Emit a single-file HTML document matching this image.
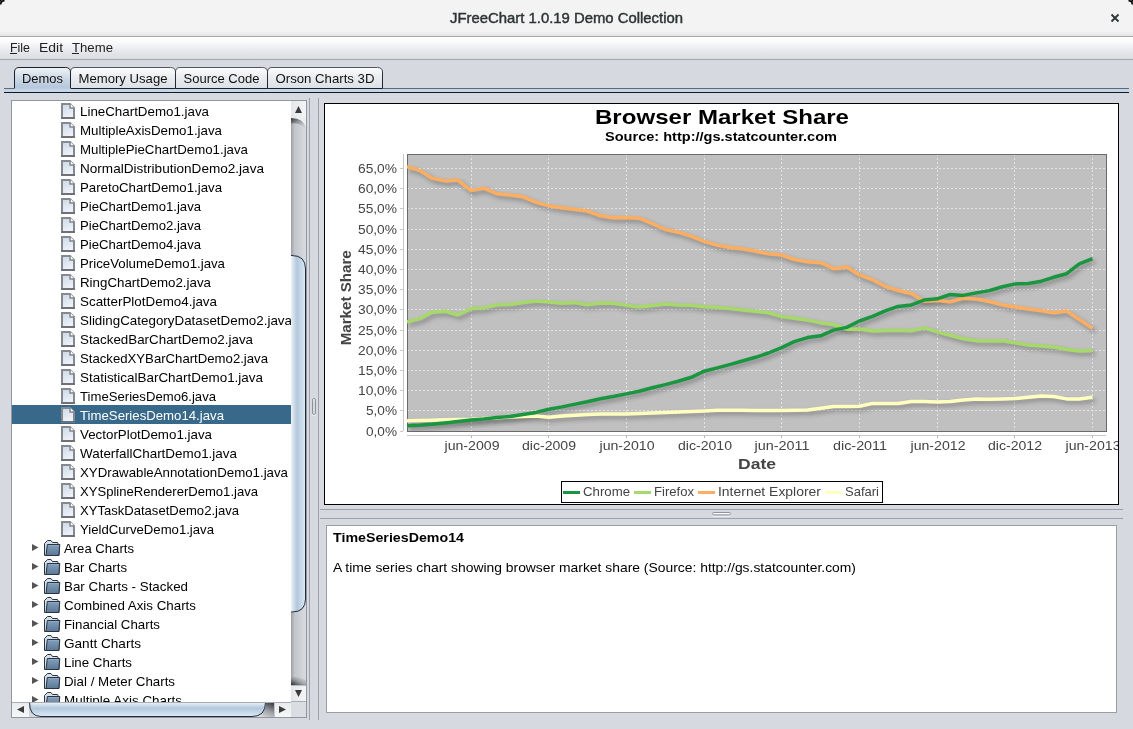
<!DOCTYPE html><html><head><meta charset="utf-8"><style>html,body{margin:0;padding:0;width:1133px;height:729px;overflow:hidden;background:#d6d9df}</style></head><body><svg width="1133" height="729" viewBox="0 0 1133 729" style="position:absolute;left:0;top:0;font-family:'Liberation Sans', sans-serif;will-change:transform">
<defs>
<linearGradient id="menug" x1="0" y1="0" x2="0" y2="1"><stop offset="0" stop-color="#fefefe"/><stop offset="0.2" stop-color="#fbfbfc"/><stop offset="0.55" stop-color="#eaecef"/><stop offset="1" stop-color="#d8dbe0"/></linearGradient>
<linearGradient id="tabsel" x1="0" y1="0" x2="0" y2="1"><stop offset="0" stop-color="#f2f5f8"/><stop offset="0.4" stop-color="#d0dbe7"/><stop offset="0.8" stop-color="#b6c8db"/><stop offset="1" stop-color="#c3d5e7"/></linearGradient>
<linearGradient id="tabun" x1="0" y1="0" x2="0" y2="1"><stop offset="0" stop-color="#fdfdfd"/><stop offset="0.4" stop-color="#eceef1"/><stop offset="1" stop-color="#dcdfe4"/></linearGradient>
<linearGradient id="trackv" x1="0" y1="0" x2="1" y2="0"><stop offset="0" stop-color="#9c9fa4"/><stop offset="0.25" stop-color="#c3c6cb"/><stop offset="1" stop-color="#d8dbe0"/></linearGradient><linearGradient id="trackh" x1="0" y1="0" x2="0" y2="1"><stop offset="0" stop-color="#9c9fa4"/><stop offset="0.25" stop-color="#c3c6cb"/><stop offset="1" stop-color="#d8dbe0"/></linearGradient><linearGradient id="wellt" x1="0" y1="0" x2="0.6" y2="1"><stop offset="0" stop-color="#2e3034"/><stop offset="1" stop-color="#c3c6cb" stop-opacity="0"/></linearGradient><linearGradient id="wellb" x1="0" y1="1" x2="1" y2="0"><stop offset="0" stop-color="#2a2c30"/><stop offset="0.45" stop-color="#9a9da2"/><stop offset="1" stop-color="#e6e8ea"/></linearGradient><linearGradient id="wellh" x1="1" y1="0" x2="0.3" y2="1"><stop offset="0" stop-color="#2a2c30"/><stop offset="0.5" stop-color="#9a9da2"/><stop offset="1" stop-color="#e6e8ea"/></linearGradient><linearGradient id="titleb" x1="0" y1="0" x2="0" y2="1"><stop offset="0" stop-color="#f3f3f3"/><stop offset="1" stop-color="#e4e4e4"/></linearGradient><linearGradient id="tabstroke" x1="0" y1="0" x2="0" y2="1"><stop offset="0" stop-color="#50555e"/><stop offset="0.35" stop-color="#262d38"/><stop offset="1" stop-color="#1a2230"/></linearGradient><linearGradient id="wellg" x1="0" y1="0" x2="0" y2="1"><stop offset="0" stop-color="#6a6d72"/><stop offset="1" stop-color="#c3c6cb" stop-opacity="0"/></linearGradient><linearGradient id="btnh" x1="0" y1="0" x2="0" y2="1"><stop offset="0" stop-color="#e9ebee"/><stop offset="1" stop-color="#f6f7f8"/></linearGradient>
<linearGradient id="thumbv" x1="0" y1="0" x2="1" y2="0"><stop offset="0" stop-color="#eef3f8"/><stop offset="0.12" stop-color="#d9e4ee"/><stop offset="0.4" stop-color="#b3c8dc"/><stop offset="0.8" stop-color="#cfe0ee"/><stop offset="1" stop-color="#e2eef7"/></linearGradient>
<linearGradient id="thumbh" x1="0" y1="0" x2="0" y2="1"><stop offset="0" stop-color="#eef3f8"/><stop offset="0.12" stop-color="#d9e4ee"/><stop offset="0.4" stop-color="#b3c8dc"/><stop offset="0.8" stop-color="#cfe0ee"/><stop offset="1" stop-color="#e2eef7"/></linearGradient>
<linearGradient id="btnv" x1="0" y1="0" x2="1" y2="0"><stop offset="0" stop-color="#e4e6e9"/><stop offset="1" stop-color="#f4f5f6"/></linearGradient>
<linearGradient id="fileg" x1="0" y1="0" x2="0.4" y2="1"><stop offset="0" stop-color="#cbd8e7"/><stop offset="1" stop-color="#eef2f8"/></linearGradient>
<linearGradient id="foldg" x1="0" y1="0" x2="0" y2="1"><stop offset="0" stop-color="#a9bdd2"/><stop offset="0.15" stop-color="#7f9ab6"/><stop offset="1" stop-color="#5a7796"/></linearGradient>
<filter id="shadow" x="-5%" y="-10%" width="110%" height="130%"><feGaussianBlur stdDeviation="1.9"/></filter>
</defs>
<rect x="0" y="0" width="1133" height="729" fill="#d6d9df"/>
<rect x="0" y="0" width="1133" height="36" fill="#f3f3f3"/>
<rect x="0" y="36" width="1133" height="1" fill="#a7a7a7"/>
<text x="450" y="23" font-size="15" font-weight="normal" fill="#2e3436" text-anchor="start" textLength="233" lengthAdjust="spacingAndGlyphs" stroke="#2e3436" stroke-width="0.45">JFreeChart 1.0.19 Demo Collection</text>
<path d="M1111.5 14.5 L1118.5 21.5 M1118.5 14.5 L1111.5 21.5" stroke="#2e3436" stroke-width="1.8"/>
<path d="M0 0 L4 0 Q0 0 0 4 Z" fill="#000"/>
<path d="M0.7 4.5 Q0.7 0.7 4.5 0.7" fill="none" stroke="#000" stroke-width="1.6"/>
<path d="M1133 0 L1129 0 Q1133 0 1133 4 Z" fill="#000"/>
<path d="M1132.3 4.5 Q1132.3 0.7 1128.5 0.7" fill="none" stroke="#000" stroke-width="1.6"/>
<rect x="0" y="31" width="1133" height="5" fill="url(#titleb)"/>
<rect x="0" y="37" width="1133" height="22" fill="url(#menug)"/>
<rect x="0" y="59" width="1133" height="1" fill="#a4a6aa"/>
<text x="10" y="52" font-size="13" font-weight="normal" fill="#222" text-anchor="start" textLength="20" lengthAdjust="spacingAndGlyphs" >File</text>
<text x="39" y="52" font-size="13" font-weight="normal" fill="#222" text-anchor="start" textLength="24" lengthAdjust="spacingAndGlyphs" >Edit</text>
<text x="72" y="52" font-size="13" font-weight="normal" fill="#222" text-anchor="start" textLength="41" lengthAdjust="spacingAndGlyphs" >Theme</text>
<rect x="10" y="53" width="7" height="1" fill="#222"/>
<rect x="72" y="53" width="7" height="1" fill="#222"/>
<rect x="4" y="88" width="1125" height="1" fill="#5f6a76"/>
<rect x="4" y="89" width="1125" height="3" fill="#c3d5e7"/>
<rect x="4" y="92" width="1125" height="1" fill="#0e1826"/>
<path d="M267.5 88.5 L267.5 72 Q267.5 67.5 272 67.5 L377.5 67.5 Q382.5 67.5 382.5 72 L382.5 88.5 Z" fill="url(#tabun)" stroke="url(#tabstroke)" stroke-width="1"/>
<text x="275.5" y="83" font-size="13" font-weight="normal" fill="#111" text-anchor="start" textLength="99" lengthAdjust="spacingAndGlyphs" >Orson Charts 3D</text>
<path d="M175.5 88.5 L175.5 72 Q175.5 67.5 180 67.5 L262.5 67.5 Q267.5 67.5 267.5 72 L267.5 88.5 Z" fill="url(#tabun)" stroke="url(#tabstroke)" stroke-width="1"/>
<text x="183.5" y="83" font-size="13" font-weight="normal" fill="#111" text-anchor="start" textLength="76" lengthAdjust="spacingAndGlyphs" >Source Code</text>
<path d="M70.5 88.5 L70.5 72 Q70.5 67.5 75 67.5 L170.5 67.5 Q175.5 67.5 175.5 72 L175.5 88.5 Z" fill="url(#tabun)" stroke="url(#tabstroke)" stroke-width="1"/>
<text x="78.5" y="83" font-size="13" font-weight="normal" fill="#111" text-anchor="start" textLength="89" lengthAdjust="spacingAndGlyphs" >Memory Usage</text>
<path d="M14 92 L14 72 Q14 67 19 67 L65.5 67 Q71 67 71 72 L71 92 Z" fill="url(#tabsel)"/>
<path d="M14.5 88.5 L14.5 72 Q14.5 67.5 19 67.5 L65.5 67.5 Q70.5 67.5 70.5 72 L70.5 88.5" fill="none" stroke="#18222e" stroke-width="1"/>
<rect x="14" y="89" width="57" height="3" fill="#c3d5e7"/>
<text x="22.0" y="83" font-size="13" font-weight="normal" fill="#111" text-anchor="start" textLength="41" lengthAdjust="spacingAndGlyphs" >Demos</text>
<rect x="11.5" y="100.5" width="295" height="617" fill="#fff" stroke="#93979d" stroke-width="1"/>
<svg x="12" y="101" width="279" height="601" viewBox="12 101 279 601" overflow="hidden">
<path d="M62 104 L70 104 L74 108 L74 118 L62 118 Z" fill="url(#fileg)" stroke="#868a90" stroke-width="2"/>
<path d="M70.5 104 L70.5 107.5 L74 107.5 Z" fill="#fff"/>
<path d="M70 104 L70 108 L74 108" fill="none" stroke="#868a90" stroke-width="1.5"/>
<rect x="61" y="117" width="14" height="2" fill="#6e7278"/>
<text x="80" y="116" font-size="13" font-weight="normal" fill="#000" text-anchor="start" textLength="129" lengthAdjust="spacingAndGlyphs" >LineChartDemo1.java</text>
<path d="M62 123 L70 123 L74 127 L74 137 L62 137 Z" fill="url(#fileg)" stroke="#868a90" stroke-width="2"/>
<path d="M70.5 123 L70.5 126.5 L74 126.5 Z" fill="#fff"/>
<path d="M70 123 L70 127 L74 127" fill="none" stroke="#868a90" stroke-width="1.5"/>
<rect x="61" y="136" width="14" height="2" fill="#6e7278"/>
<text x="80" y="135" font-size="13" font-weight="normal" fill="#000" text-anchor="start" textLength="142" lengthAdjust="spacingAndGlyphs" >MultipleAxisDemo1.java</text>
<path d="M62 142 L70 142 L74 146 L74 156 L62 156 Z" fill="url(#fileg)" stroke="#868a90" stroke-width="2"/>
<path d="M70.5 142 L70.5 145.5 L74 145.5 Z" fill="#fff"/>
<path d="M70 142 L70 146 L74 146" fill="none" stroke="#868a90" stroke-width="1.5"/>
<rect x="61" y="155" width="14" height="2" fill="#6e7278"/>
<text x="80" y="154" font-size="13" font-weight="normal" fill="#000" text-anchor="start" textLength="168" lengthAdjust="spacingAndGlyphs" >MultiplePieChartDemo1.java</text>
<path d="M62 161 L70 161 L74 165 L74 175 L62 175 Z" fill="url(#fileg)" stroke="#868a90" stroke-width="2"/>
<path d="M70.5 161 L70.5 164.5 L74 164.5 Z" fill="#fff"/>
<path d="M70 161 L70 165 L74 165" fill="none" stroke="#868a90" stroke-width="1.5"/>
<rect x="61" y="174" width="14" height="2" fill="#6e7278"/>
<text x="80" y="173" font-size="13" font-weight="normal" fill="#000" text-anchor="start" textLength="184" lengthAdjust="spacingAndGlyphs" >NormalDistributionDemo2.java</text>
<path d="M62 180 L70 180 L74 184 L74 194 L62 194 Z" fill="url(#fileg)" stroke="#868a90" stroke-width="2"/>
<path d="M70.5 180 L70.5 183.5 L74 183.5 Z" fill="#fff"/>
<path d="M70 180 L70 184 L74 184" fill="none" stroke="#868a90" stroke-width="1.5"/>
<rect x="61" y="193" width="14" height="2" fill="#6e7278"/>
<text x="80" y="192" font-size="13" font-weight="normal" fill="#000" text-anchor="start" textLength="142" lengthAdjust="spacingAndGlyphs" >ParetoChartDemo1.java</text>
<path d="M62 199 L70 199 L74 203 L74 213 L62 213 Z" fill="url(#fileg)" stroke="#868a90" stroke-width="2"/>
<path d="M70.5 199 L70.5 202.5 L74 202.5 Z" fill="#fff"/>
<path d="M70 199 L70 203 L74 203" fill="none" stroke="#868a90" stroke-width="1.5"/>
<rect x="61" y="212" width="14" height="2" fill="#6e7278"/>
<text x="80" y="211" font-size="13" font-weight="normal" fill="#000" text-anchor="start" textLength="121" lengthAdjust="spacingAndGlyphs" >PieChartDemo1.java</text>
<path d="M62 218 L70 218 L74 222 L74 232 L62 232 Z" fill="url(#fileg)" stroke="#868a90" stroke-width="2"/>
<path d="M70.5 218 L70.5 221.5 L74 221.5 Z" fill="#fff"/>
<path d="M70 218 L70 222 L74 222" fill="none" stroke="#868a90" stroke-width="1.5"/>
<rect x="61" y="231" width="14" height="2" fill="#6e7278"/>
<text x="80" y="230" font-size="13" font-weight="normal" fill="#000" text-anchor="start" textLength="121" lengthAdjust="spacingAndGlyphs" >PieChartDemo2.java</text>
<path d="M62 237 L70 237 L74 241 L74 251 L62 251 Z" fill="url(#fileg)" stroke="#868a90" stroke-width="2"/>
<path d="M70.5 237 L70.5 240.5 L74 240.5 Z" fill="#fff"/>
<path d="M70 237 L70 241 L74 241" fill="none" stroke="#868a90" stroke-width="1.5"/>
<rect x="61" y="250" width="14" height="2" fill="#6e7278"/>
<text x="80" y="249" font-size="13" font-weight="normal" fill="#000" text-anchor="start" textLength="121" lengthAdjust="spacingAndGlyphs" >PieChartDemo4.java</text>
<path d="M62 256 L70 256 L74 260 L74 270 L62 270 Z" fill="url(#fileg)" stroke="#868a90" stroke-width="2"/>
<path d="M70.5 256 L70.5 259.5 L74 259.5 Z" fill="#fff"/>
<path d="M70 256 L70 260 L74 260" fill="none" stroke="#868a90" stroke-width="1.5"/>
<rect x="61" y="269" width="14" height="2" fill="#6e7278"/>
<text x="80" y="268" font-size="13" font-weight="normal" fill="#000" text-anchor="start" textLength="145" lengthAdjust="spacingAndGlyphs" >PriceVolumeDemo1.java</text>
<path d="M62 275 L70 275 L74 279 L74 289 L62 289 Z" fill="url(#fileg)" stroke="#868a90" stroke-width="2"/>
<path d="M70.5 275 L70.5 278.5 L74 278.5 Z" fill="#fff"/>
<path d="M70 275 L70 279 L74 279" fill="none" stroke="#868a90" stroke-width="1.5"/>
<rect x="61" y="288" width="14" height="2" fill="#6e7278"/>
<text x="80" y="287" font-size="13" font-weight="normal" fill="#000" text-anchor="start" textLength="131" lengthAdjust="spacingAndGlyphs" >RingChartDemo2.java</text>
<path d="M62 294 L70 294 L74 298 L74 308 L62 308 Z" fill="url(#fileg)" stroke="#868a90" stroke-width="2"/>
<path d="M70.5 294 L70.5 297.5 L74 297.5 Z" fill="#fff"/>
<path d="M70 294 L70 298 L74 298" fill="none" stroke="#868a90" stroke-width="1.5"/>
<rect x="61" y="307" width="14" height="2" fill="#6e7278"/>
<text x="80" y="306" font-size="13" font-weight="normal" fill="#000" text-anchor="start" textLength="137" lengthAdjust="spacingAndGlyphs" >ScatterPlotDemo4.java</text>
<path d="M62 313 L70 313 L74 317 L74 327 L62 327 Z" fill="url(#fileg)" stroke="#868a90" stroke-width="2"/>
<path d="M70.5 313 L70.5 316.5 L74 316.5 Z" fill="#fff"/>
<path d="M70 313 L70 317 L74 317" fill="none" stroke="#868a90" stroke-width="1.5"/>
<rect x="61" y="326" width="14" height="2" fill="#6e7278"/>
<text x="80" y="325" font-size="13" font-weight="normal" fill="#000" text-anchor="start" textLength="212" lengthAdjust="spacingAndGlyphs" >SlidingCategoryDatasetDemo2.java</text>
<path d="M62 332 L70 332 L74 336 L74 346 L62 346 Z" fill="url(#fileg)" stroke="#868a90" stroke-width="2"/>
<path d="M70.5 332 L70.5 335.5 L74 335.5 Z" fill="#fff"/>
<path d="M70 332 L70 336 L74 336" fill="none" stroke="#868a90" stroke-width="1.5"/>
<rect x="61" y="345" width="14" height="2" fill="#6e7278"/>
<text x="80" y="344" font-size="13" font-weight="normal" fill="#000" text-anchor="start" textLength="173" lengthAdjust="spacingAndGlyphs" >StackedBarChartDemo2.java</text>
<path d="M62 351 L70 351 L74 355 L74 365 L62 365 Z" fill="url(#fileg)" stroke="#868a90" stroke-width="2"/>
<path d="M70.5 351 L70.5 354.5 L74 354.5 Z" fill="#fff"/>
<path d="M70 351 L70 355 L74 355" fill="none" stroke="#868a90" stroke-width="1.5"/>
<rect x="61" y="364" width="14" height="2" fill="#6e7278"/>
<text x="80" y="363" font-size="13" font-weight="normal" fill="#000" text-anchor="start" textLength="188" lengthAdjust="spacingAndGlyphs" >StackedXYBarChartDemo2.java</text>
<path d="M62 370 L70 370 L74 374 L74 384 L62 384 Z" fill="url(#fileg)" stroke="#868a90" stroke-width="2"/>
<path d="M70.5 370 L70.5 373.5 L74 373.5 Z" fill="#fff"/>
<path d="M70 370 L70 374 L74 374" fill="none" stroke="#868a90" stroke-width="1.5"/>
<rect x="61" y="383" width="14" height="2" fill="#6e7278"/>
<text x="80" y="382" font-size="13" font-weight="normal" fill="#000" text-anchor="start" textLength="183" lengthAdjust="spacingAndGlyphs" >StatisticalBarChartDemo1.java</text>
<path d="M62 389 L70 389 L74 393 L74 403 L62 403 Z" fill="url(#fileg)" stroke="#868a90" stroke-width="2"/>
<path d="M70.5 389 L70.5 392.5 L74 392.5 Z" fill="#fff"/>
<path d="M70 389 L70 393 L74 393" fill="none" stroke="#868a90" stroke-width="1.5"/>
<rect x="61" y="402" width="14" height="2" fill="#6e7278"/>
<text x="80" y="401" font-size="13" font-weight="normal" fill="#000" text-anchor="start" textLength="136" lengthAdjust="spacingAndGlyphs" >TimeSeriesDemo6.java</text>
<rect x="12" y="405" width="279" height="19" fill="#39698a"/>
<path d="M62 408 L70 408 L74 412 L74 422 L62 422 Z" fill="url(#fileg)" stroke="#868a90" stroke-width="2"/>
<path d="M70.5 408 L70.5 411.5 L74 411.5 Z" fill="#fff"/>
<path d="M70 408 L70 412 L74 412" fill="none" stroke="#868a90" stroke-width="1.5"/>
<rect x="61" y="421" width="14" height="2" fill="#6e7278"/>
<text x="80" y="420" font-size="13" font-weight="normal" fill="#fff" text-anchor="start" textLength="144" lengthAdjust="spacingAndGlyphs" >TimeSeriesDemo14.java</text>
<path d="M62 427 L70 427 L74 431 L74 441 L62 441 Z" fill="url(#fileg)" stroke="#868a90" stroke-width="2"/>
<path d="M70.5 427 L70.5 430.5 L74 430.5 Z" fill="#fff"/>
<path d="M70 427 L70 431 L74 431" fill="none" stroke="#868a90" stroke-width="1.5"/>
<rect x="61" y="440" width="14" height="2" fill="#6e7278"/>
<text x="80" y="439" font-size="13" font-weight="normal" fill="#000" text-anchor="start" textLength="132" lengthAdjust="spacingAndGlyphs" >VectorPlotDemo1.java</text>
<path d="M62 446 L70 446 L74 450 L74 460 L62 460 Z" fill="url(#fileg)" stroke="#868a90" stroke-width="2"/>
<path d="M70.5 446 L70.5 449.5 L74 449.5 Z" fill="#fff"/>
<path d="M70 446 L70 450 L74 450" fill="none" stroke="#868a90" stroke-width="1.5"/>
<rect x="61" y="459" width="14" height="2" fill="#6e7278"/>
<text x="80" y="458" font-size="13" font-weight="normal" fill="#000" text-anchor="start" textLength="157" lengthAdjust="spacingAndGlyphs" >WaterfallChartDemo1.java</text>
<path d="M62 465 L70 465 L74 469 L74 479 L62 479 Z" fill="url(#fileg)" stroke="#868a90" stroke-width="2"/>
<path d="M70.5 465 L70.5 468.5 L74 468.5 Z" fill="#fff"/>
<path d="M70 465 L70 469 L74 469" fill="none" stroke="#868a90" stroke-width="1.5"/>
<rect x="61" y="478" width="14" height="2" fill="#6e7278"/>
<text x="80" y="477" font-size="13" font-weight="normal" fill="#000" text-anchor="start" textLength="208" lengthAdjust="spacingAndGlyphs" >XYDrawableAnnotationDemo1.java</text>
<path d="M62 484 L70 484 L74 488 L74 498 L62 498 Z" fill="url(#fileg)" stroke="#868a90" stroke-width="2"/>
<path d="M70.5 484 L70.5 487.5 L74 487.5 Z" fill="#fff"/>
<path d="M70 484 L70 488 L74 488" fill="none" stroke="#868a90" stroke-width="1.5"/>
<rect x="61" y="497" width="14" height="2" fill="#6e7278"/>
<text x="80" y="496" font-size="13" font-weight="normal" fill="#000" text-anchor="start" textLength="178" lengthAdjust="spacingAndGlyphs" >XYSplineRendererDemo1.java</text>
<path d="M62 503 L70 503 L74 507 L74 517 L62 517 Z" fill="url(#fileg)" stroke="#868a90" stroke-width="2"/>
<path d="M70.5 503 L70.5 506.5 L74 506.5 Z" fill="#fff"/>
<path d="M70 503 L70 507 L74 507" fill="none" stroke="#868a90" stroke-width="1.5"/>
<rect x="61" y="516" width="14" height="2" fill="#6e7278"/>
<text x="80" y="515" font-size="13" font-weight="normal" fill="#000" text-anchor="start" textLength="159" lengthAdjust="spacingAndGlyphs" >XYTaskDatasetDemo2.java</text>
<path d="M62 522 L70 522 L74 526 L74 536 L62 536 Z" fill="url(#fileg)" stroke="#868a90" stroke-width="2"/>
<path d="M70.5 522 L70.5 525.5 L74 525.5 Z" fill="#fff"/>
<path d="M70 522 L70 526 L74 526" fill="none" stroke="#868a90" stroke-width="1.5"/>
<rect x="61" y="535" width="14" height="2" fill="#6e7278"/>
<text x="80" y="534" font-size="13" font-weight="normal" fill="#000" text-anchor="start" textLength="134" lengthAdjust="spacingAndGlyphs" >YieldCurveDemo1.java</text>
<path d="M32 544 L38.5 547.5 L32 551 Z" fill="#555"/>
<path d="M44.5 555.5 L44.5 543.5 L47.5 540.5 L51 540.5 L52.5 542.5 L57.5 542.5 L58.5 544.5 L59.5 544.5 L59 555.5 Z" fill="#d3dfeb" stroke="#28333f" stroke-width="1"/>
<path d="M46 555.5 L47.3 544.5 L59.8 544.5 L58.8 555.5 Z" fill="url(#foldg)" stroke="#28333f" stroke-width="1"/>
<text x="64" y="553" font-size="13" font-weight="normal" fill="#000" text-anchor="start" textLength="70" lengthAdjust="spacingAndGlyphs" >Area Charts</text>
<path d="M32 563 L38.5 566.5 L32 570 Z" fill="#555"/>
<path d="M44.5 574.5 L44.5 562.5 L47.5 559.5 L51 559.5 L52.5 561.5 L57.5 561.5 L58.5 563.5 L59.5 563.5 L59 574.5 Z" fill="#d3dfeb" stroke="#28333f" stroke-width="1"/>
<path d="M46 574.5 L47.3 563.5 L59.8 563.5 L58.8 574.5 Z" fill="url(#foldg)" stroke="#28333f" stroke-width="1"/>
<text x="64" y="572" font-size="13" font-weight="normal" fill="#000" text-anchor="start" textLength="63" lengthAdjust="spacingAndGlyphs" >Bar Charts</text>
<path d="M32 582 L38.5 585.5 L32 589 Z" fill="#555"/>
<path d="M44.5 593.5 L44.5 581.5 L47.5 578.5 L51 578.5 L52.5 580.5 L57.5 580.5 L58.5 582.5 L59.5 582.5 L59 593.5 Z" fill="#d3dfeb" stroke="#28333f" stroke-width="1"/>
<path d="M46 593.5 L47.3 582.5 L59.8 582.5 L58.8 593.5 Z" fill="url(#foldg)" stroke="#28333f" stroke-width="1"/>
<text x="64" y="591" font-size="13" font-weight="normal" fill="#000" text-anchor="start" textLength="124" lengthAdjust="spacingAndGlyphs" >Bar Charts - Stacked</text>
<path d="M32 601 L38.5 604.5 L32 608 Z" fill="#555"/>
<path d="M44.5 612.5 L44.5 600.5 L47.5 597.5 L51 597.5 L52.5 599.5 L57.5 599.5 L58.5 601.5 L59.5 601.5 L59 612.5 Z" fill="#d3dfeb" stroke="#28333f" stroke-width="1"/>
<path d="M46 612.5 L47.3 601.5 L59.8 601.5 L58.8 612.5 Z" fill="url(#foldg)" stroke="#28333f" stroke-width="1"/>
<text x="64" y="610" font-size="13" font-weight="normal" fill="#000" text-anchor="start" textLength="132" lengthAdjust="spacingAndGlyphs" >Combined Axis Charts</text>
<path d="M32 620 L38.5 623.5 L32 627 Z" fill="#555"/>
<path d="M44.5 631.5 L44.5 619.5 L47.5 616.5 L51 616.5 L52.5 618.5 L57.5 618.5 L58.5 620.5 L59.5 620.5 L59 631.5 Z" fill="#d3dfeb" stroke="#28333f" stroke-width="1"/>
<path d="M46 631.5 L47.3 620.5 L59.8 620.5 L58.8 631.5 Z" fill="url(#foldg)" stroke="#28333f" stroke-width="1"/>
<text x="64" y="629" font-size="13" font-weight="normal" fill="#000" text-anchor="start" textLength="96" lengthAdjust="spacingAndGlyphs" >Financial Charts</text>
<path d="M32 639 L38.5 642.5 L32 646 Z" fill="#555"/>
<path d="M44.5 650.5 L44.5 638.5 L47.5 635.5 L51 635.5 L52.5 637.5 L57.5 637.5 L58.5 639.5 L59.5 639.5 L59 650.5 Z" fill="#d3dfeb" stroke="#28333f" stroke-width="1"/>
<path d="M46 650.5 L47.3 639.5 L59.8 639.5 L58.8 650.5 Z" fill="url(#foldg)" stroke="#28333f" stroke-width="1"/>
<text x="64" y="648" font-size="13" font-weight="normal" fill="#000" text-anchor="start" textLength="77" lengthAdjust="spacingAndGlyphs" >Gantt Charts</text>
<path d="M32 658 L38.5 661.5 L32 665 Z" fill="#555"/>
<path d="M44.5 669.5 L44.5 657.5 L47.5 654.5 L51 654.5 L52.5 656.5 L57.5 656.5 L58.5 658.5 L59.5 658.5 L59 669.5 Z" fill="#d3dfeb" stroke="#28333f" stroke-width="1"/>
<path d="M46 669.5 L47.3 658.5 L59.8 658.5 L58.8 669.5 Z" fill="url(#foldg)" stroke="#28333f" stroke-width="1"/>
<text x="64" y="667" font-size="13" font-weight="normal" fill="#000" text-anchor="start" textLength="68" lengthAdjust="spacingAndGlyphs" >Line Charts</text>
<path d="M32 677 L38.5 680.5 L32 684 Z" fill="#555"/>
<path d="M44.5 688.5 L44.5 676.5 L47.5 673.5 L51 673.5 L52.5 675.5 L57.5 675.5 L58.5 677.5 L59.5 677.5 L59 688.5 Z" fill="#d3dfeb" stroke="#28333f" stroke-width="1"/>
<path d="M46 688.5 L47.3 677.5 L59.8 677.5 L58.8 688.5 Z" fill="url(#foldg)" stroke="#28333f" stroke-width="1"/>
<text x="64" y="686" font-size="13" font-weight="normal" fill="#000" text-anchor="start" textLength="111" lengthAdjust="spacingAndGlyphs" >Dial / Meter Charts</text>
<path d="M32 696 L38.5 699.5 L32 703 Z" fill="#555"/>
<path d="M44.5 707.5 L44.5 695.5 L47.5 692.5 L51 692.5 L52.5 694.5 L57.5 694.5 L58.5 696.5 L59.5 696.5 L59 707.5 Z" fill="#d3dfeb" stroke="#28333f" stroke-width="1"/>
<path d="M46 707.5 L47.3 696.5 L59.8 696.5 L58.8 707.5 Z" fill="url(#foldg)" stroke="#28333f" stroke-width="1"/>
<text x="64" y="705" font-size="13" font-weight="normal" fill="#000" text-anchor="start" textLength="118" lengthAdjust="spacingAndGlyphs" >Multiple Axis Charts</text>
</svg>
<rect x="291" y="101" width="15" height="601" fill="url(#trackv)"/>
<path d="M291 118 Q303 118 306 127 L306 132 Q302 122 291 123.5 Z" fill="url(#wellt)"/>
<path d="M291 118 L306 118 L306 127 Q303 118 291 118 Z" fill="#eceef0"/>
<rect x="291" y="101" width="15" height="17" fill="url(#btnv)"/>
<path d="M298.5 106 L302 113 L295 113 Z" fill="#3a3a3a"/>
<path d="M291 676.5 Q301 677 306 680 L306 685 L291 685 Z" fill="url(#wellb)"/>
<rect x="291" y="685" width="15" height="17" fill="url(#btnv)"/>
<rect x="291" y="685" width="15" height="1" fill="#b9bcc1"/>
<path d="M295 690 L302 690 L298.5 697 Z" fill="#3a3a3a"/>
<path d="M291 255 L292 255 Q306 255 306 269 L306 599 Q306 612.5 292 612.5 L291 612.5 Z" fill="url(#thumbv)"/>
<path d="M291 255.5 L292 255.5 Q305.5 255.5 305.5 269 L305.5 599 Q305.5 612 292 612 L291 612" fill="none" stroke="#1f2b39" stroke-width="1"/>
<rect x="306" y="101" width="1" height="617" fill="#93979d"/>
<rect x="12" y="702" width="279" height="15" fill="url(#trackh)"/>
<rect x="12" y="702" width="17" height="15" fill="url(#btnh)"/>
<path d="M17 709.5 L24 706 L24 713 Z" fill="#3a3a3a"/>
<path d="M262 702 L274 702 L274 717 L250 717 Q266 716 266 702 Z" fill="url(#wellh)"/>
<rect x="274" y="702" width="17" height="15" fill="url(#btnh)"/>
<rect x="274" y="702" width="1" height="15" fill="#c4c7cc"/>
<path d="M286 709.5 L279 706 L279 713 Z" fill="#3a3a3a"/>
<path d="M29 702.5 L266 702.5 Q266 717 252 717 L41 717 Q29 717 29 702.5 Z" fill="url(#thumbh)"/>
<path d="M29.5 702.5 Q29.5 716.5 41 716.5 L252 716.5 Q265.5 716.5 265.5 702.5" fill="none" stroke="#1f2b39" stroke-width="1"/>
<rect x="12" y="702" width="294" height="1" fill="#a9adb3"/>
<rect x="291" y="702" width="15" height="15" fill="#dadde2"/>
<rect x="291" y="701" width="15" height="1" fill="#a9adb3"/>
<rect x="11" y="717" width="296" height="1" fill="#93979d"/>
<rect x="309" y="98" width="1" height="622" fill="#9ea2a8"/>
<rect x="318" y="98" width="1" height="622" fill="#9ea2a8"/>
<rect x="312.5" y="399.5" width="3" height="16" rx="1.5" fill="none" stroke="#fafbfc"/>
<rect x="312.5" y="398.5" width="3" height="16" rx="1.5" fill="none" stroke="#8f949b"/>
<rect x="324.5" y="103.5" width="794" height="401" fill="#fff" stroke="#000" stroke-width="1"/>
<rect x="320" y="509" width="803" height="1" fill="#9ea2a8"/>
<rect x="320" y="518" width="803" height="1" fill="#9ea2a8"/>
<rect x="712.5" y="513.5" width="18" height="2.5" rx="1.2" fill="none" stroke="#fafbfc"/>
<rect x="712.5" y="512.5" width="18" height="2.5" rx="1.2" fill="none" stroke="#8f949b"/>
<rect x="326.5" y="525.5" width="790" height="187" fill="#fff" stroke="#9a9ea4" stroke-width="1"/>
<text x="333" y="542" font-size="13" font-weight="bold" fill="#000" text-anchor="start" textLength="131" lengthAdjust="spacingAndGlyphs" >TimeSeriesDemo14</text>
<text x="333" y="572" font-size="13" font-weight="normal" fill="#000" text-anchor="start" textLength="523" lengthAdjust="spacingAndGlyphs" >A time series chart showing browser market share (Source: http://gs.statcounter.com)</text>
<rect x="407" y="154" width="699" height="277" fill="#c0c0c0"/>
<line x1="407" y1="431.5" x2="1106" y2="431.5" stroke="#e4e4e4" stroke-width="1" stroke-dasharray="2,2"/>
<line x1="407" y1="410.5" x2="1106" y2="410.5" stroke="#e4e4e4" stroke-width="1" stroke-dasharray="2,2"/>
<line x1="407" y1="390.5" x2="1106" y2="390.5" stroke="#e4e4e4" stroke-width="1" stroke-dasharray="2,2"/>
<line x1="407" y1="370.5" x2="1106" y2="370.5" stroke="#e4e4e4" stroke-width="1" stroke-dasharray="2,2"/>
<line x1="407" y1="350.5" x2="1106" y2="350.5" stroke="#e4e4e4" stroke-width="1" stroke-dasharray="2,2"/>
<line x1="407" y1="330.5" x2="1106" y2="330.5" stroke="#e4e4e4" stroke-width="1" stroke-dasharray="2,2"/>
<line x1="407" y1="309.5" x2="1106" y2="309.5" stroke="#e4e4e4" stroke-width="1" stroke-dasharray="2,2"/>
<line x1="407" y1="289.5" x2="1106" y2="289.5" stroke="#e4e4e4" stroke-width="1" stroke-dasharray="2,2"/>
<line x1="407" y1="269.5" x2="1106" y2="269.5" stroke="#e4e4e4" stroke-width="1" stroke-dasharray="2,2"/>
<line x1="407" y1="249.5" x2="1106" y2="249.5" stroke="#e4e4e4" stroke-width="1" stroke-dasharray="2,2"/>
<line x1="407" y1="229.5" x2="1106" y2="229.5" stroke="#e4e4e4" stroke-width="1" stroke-dasharray="2,2"/>
<line x1="407" y1="208.5" x2="1106" y2="208.5" stroke="#e4e4e4" stroke-width="1" stroke-dasharray="2,2"/>
<line x1="407" y1="188.5" x2="1106" y2="188.5" stroke="#e4e4e4" stroke-width="1" stroke-dasharray="2,2"/>
<line x1="407" y1="168.5" x2="1106" y2="168.5" stroke="#e4e4e4" stroke-width="1" stroke-dasharray="2,2"/>
<line x1="471.5" y1="154" x2="471.5" y2="431" stroke="#e4e4e4" stroke-width="1" stroke-dasharray="2,2"/>
<line x1="548.5" y1="154" x2="548.5" y2="431" stroke="#e4e4e4" stroke-width="1" stroke-dasharray="2,2"/>
<line x1="626.5" y1="154" x2="626.5" y2="431" stroke="#e4e4e4" stroke-width="1" stroke-dasharray="2,2"/>
<line x1="704.5" y1="154" x2="704.5" y2="431" stroke="#e4e4e4" stroke-width="1" stroke-dasharray="2,2"/>
<line x1="781.5" y1="154" x2="781.5" y2="431" stroke="#e4e4e4" stroke-width="1" stroke-dasharray="2,2"/>
<line x1="859.5" y1="154" x2="859.5" y2="431" stroke="#e4e4e4" stroke-width="1" stroke-dasharray="2,2"/>
<line x1="937.5" y1="154" x2="937.5" y2="431" stroke="#e4e4e4" stroke-width="1" stroke-dasharray="2,2"/>
<line x1="1014.5" y1="154" x2="1014.5" y2="431" stroke="#e4e4e4" stroke-width="1" stroke-dasharray="2,2"/>
<line x1="1092.5" y1="154" x2="1092.5" y2="431" stroke="#e4e4e4" stroke-width="1" stroke-dasharray="2,2"/>
<rect x="407.5" y="154.5" width="699" height="277" fill="none" stroke="#6a6a6a" stroke-width="1"/>
<line x1="403.5" y1="154" x2="403.5" y2="431" stroke="#c8c8c8"/>
<line x1="407" y1="435.5" x2="1106" y2="435.5" stroke="#c8c8c8"/>
<line x1="400" y1="431.5" x2="403" y2="431.5" stroke="#c8c8c8"/>
<text x="366" y="435.5" font-size="13" font-weight="normal" fill="#444" text-anchor="start" textLength="31" lengthAdjust="spacingAndGlyphs" >0,0%</text>
<line x1="400" y1="410.5" x2="403" y2="410.5" stroke="#c8c8c8"/>
<text x="366" y="414.5" font-size="13" font-weight="normal" fill="#444" text-anchor="start" textLength="31" lengthAdjust="spacingAndGlyphs" >5,0%</text>
<line x1="400" y1="390.5" x2="403" y2="390.5" stroke="#c8c8c8"/>
<text x="358" y="394.5" font-size="13" font-weight="normal" fill="#444" text-anchor="start" textLength="39" lengthAdjust="spacingAndGlyphs" >10,0%</text>
<line x1="400" y1="370.5" x2="403" y2="370.5" stroke="#c8c8c8"/>
<text x="358" y="374.5" font-size="13" font-weight="normal" fill="#444" text-anchor="start" textLength="39" lengthAdjust="spacingAndGlyphs" >15,0%</text>
<line x1="400" y1="350.5" x2="403" y2="350.5" stroke="#c8c8c8"/>
<text x="358" y="354.5" font-size="13" font-weight="normal" fill="#444" text-anchor="start" textLength="39" lengthAdjust="spacingAndGlyphs" >20,0%</text>
<line x1="400" y1="330.5" x2="403" y2="330.5" stroke="#c8c8c8"/>
<text x="358" y="334.5" font-size="13" font-weight="normal" fill="#444" text-anchor="start" textLength="39" lengthAdjust="spacingAndGlyphs" >25,0%</text>
<line x1="400" y1="309.5" x2="403" y2="309.5" stroke="#c8c8c8"/>
<text x="358" y="313.5" font-size="13" font-weight="normal" fill="#444" text-anchor="start" textLength="39" lengthAdjust="spacingAndGlyphs" >30,0%</text>
<line x1="400" y1="289.5" x2="403" y2="289.5" stroke="#c8c8c8"/>
<text x="358" y="293.5" font-size="13" font-weight="normal" fill="#444" text-anchor="start" textLength="39" lengthAdjust="spacingAndGlyphs" >35,0%</text>
<line x1="400" y1="269.5" x2="403" y2="269.5" stroke="#c8c8c8"/>
<text x="358" y="273.5" font-size="13" font-weight="normal" fill="#444" text-anchor="start" textLength="39" lengthAdjust="spacingAndGlyphs" >40,0%</text>
<line x1="400" y1="249.5" x2="403" y2="249.5" stroke="#c8c8c8"/>
<text x="358" y="253.5" font-size="13" font-weight="normal" fill="#444" text-anchor="start" textLength="39" lengthAdjust="spacingAndGlyphs" >45,0%</text>
<line x1="400" y1="229.5" x2="403" y2="229.5" stroke="#c8c8c8"/>
<text x="358" y="233.5" font-size="13" font-weight="normal" fill="#444" text-anchor="start" textLength="39" lengthAdjust="spacingAndGlyphs" >50,0%</text>
<line x1="400" y1="208.5" x2="403" y2="208.5" stroke="#c8c8c8"/>
<text x="358" y="212.5" font-size="13" font-weight="normal" fill="#444" text-anchor="start" textLength="39" lengthAdjust="spacingAndGlyphs" >55,0%</text>
<line x1="400" y1="188.5" x2="403" y2="188.5" stroke="#c8c8c8"/>
<text x="358" y="192.5" font-size="13" font-weight="normal" fill="#444" text-anchor="start" textLength="39" lengthAdjust="spacingAndGlyphs" >60,0%</text>
<line x1="400" y1="168.5" x2="403" y2="168.5" stroke="#c8c8c8"/>
<text x="358" y="172.5" font-size="13" font-weight="normal" fill="#444" text-anchor="start" textLength="39" lengthAdjust="spacingAndGlyphs" >65,0%</text>
<line x1="471.5" y1="436" x2="471.5" y2="438" stroke="#b0b0b0"/>
<text x="444.5" y="450" font-size="13" font-weight="normal" fill="#444" text-anchor="start" textLength="55" lengthAdjust="spacingAndGlyphs" >jun-2009</text>
<line x1="548.5" y1="436" x2="548.5" y2="438" stroke="#b0b0b0"/>
<text x="522.0" y="450" font-size="13" font-weight="normal" fill="#444" text-anchor="start" textLength="54" lengthAdjust="spacingAndGlyphs" >dic-2009</text>
<line x1="626.5" y1="436" x2="626.5" y2="438" stroke="#b0b0b0"/>
<text x="599.5" y="450" font-size="13" font-weight="normal" fill="#444" text-anchor="start" textLength="55" lengthAdjust="spacingAndGlyphs" >jun-2010</text>
<line x1="704.5" y1="436" x2="704.5" y2="438" stroke="#b0b0b0"/>
<text x="678.0" y="450" font-size="13" font-weight="normal" fill="#444" text-anchor="start" textLength="54" lengthAdjust="spacingAndGlyphs" >dic-2010</text>
<line x1="781.5" y1="436" x2="781.5" y2="438" stroke="#b0b0b0"/>
<text x="754.5" y="450" font-size="13" font-weight="normal" fill="#444" text-anchor="start" textLength="55" lengthAdjust="spacingAndGlyphs" >jun-2011</text>
<line x1="859.5" y1="436" x2="859.5" y2="438" stroke="#b0b0b0"/>
<text x="833.0" y="450" font-size="13" font-weight="normal" fill="#444" text-anchor="start" textLength="54" lengthAdjust="spacingAndGlyphs" >dic-2011</text>
<line x1="937.5" y1="436" x2="937.5" y2="438" stroke="#b0b0b0"/>
<text x="910.5" y="450" font-size="13" font-weight="normal" fill="#444" text-anchor="start" textLength="55" lengthAdjust="spacingAndGlyphs" >jun-2012</text>
<line x1="1014.5" y1="436" x2="1014.5" y2="438" stroke="#b0b0b0"/>
<text x="988.0" y="450" font-size="13" font-weight="normal" fill="#444" text-anchor="start" textLength="54" lengthAdjust="spacingAndGlyphs" >dic-2012</text>
<line x1="1092.5" y1="436" x2="1092.5" y2="438" stroke="#b0b0b0"/>
<text x="1065.5" y="450" font-size="13" font-weight="normal" fill="#444" text-anchor="start" textLength="55" lengthAdjust="spacingAndGlyphs" >jun-2013</text>
<text x="738.0" y="469" font-size="15" font-weight="bold" fill="#444" text-anchor="start" textLength="38" lengthAdjust="spacingAndGlyphs" >Date</text>
<g transform="translate(350.5,297.8) rotate(-90)">
<text x="-47.5" y="0" font-size="14.5" font-weight="bold" fill="#444" text-anchor="start" textLength="95" lengthAdjust="spacingAndGlyphs" >Market Share</text>
</g>
<text x="595.0" y="124" font-size="20.5" font-weight="bold" fill="#000" text-anchor="start" textLength="254" lengthAdjust="spacingAndGlyphs" >Browser Market Share</text>
<text x="605.0" y="141" font-size="12.5" font-weight="bold" fill="#000" text-anchor="start" textLength="232" lengthAdjust="spacingAndGlyphs" >Source: http://gs.statcounter.com</text>
<svg x="407" y="154" width="699" height="277" viewBox="407 154 699 277" overflow="hidden">
<polyline points="406.8,425.7 420.0,425.2 431.9,424.3 445.1,422.9 457.8,421.5 471.0,419.9 483.8,419.1 497.0,417.6 510.2,416.4 522.9,414.4 536.1,412.4 548.9,409.2 562.1,406.9 575.3,404.1 587.2,401.8 600.4,398.7 613.1,396.5 626.3,393.9 639.1,391.3 652.3,387.8 665.4,384.6 678.2,381.2 691.4,377.3 704.2,371.2 717.3,367.9 730.5,364.4 742.4,361.0 755.6,357.3 768.4,353.0 781.6,347.7 794.3,341.7 807.5,337.6 820.7,335.8 833.5,330.1 846.7,327.4 859.4,321.0 872.6,316.4 885.8,310.6 898.1,306.4 911.3,304.9 924.1,300.1 937.3,298.8 950.0,294.5 963.2,295.4 976.4,292.9 989.2,290.6 1002.4,286.8 1015.1,283.9 1028.3,283.5 1041.5,281.2 1053.4,277.3 1066.6,273.7 1079.3,263.8 1092.5,258.6" fill="none" stroke="#3a3a3a" stroke-opacity="0.42" stroke-width="3.5" transform="translate(2.5,3)" filter="url(#shadow)"/>
<polyline points="406.8,321.9 420.0,318.6 431.9,312.3 445.1,311.3 457.8,315.0 471.0,308.6 483.8,307.9 497.0,304.7 510.2,304.5 522.9,302.6 536.1,301.0 548.9,301.9 562.1,303.3 575.3,302.6 587.2,304.8 600.4,302.9 613.1,303.3 626.3,305.3 639.1,307.1 652.3,305.5 665.4,303.9 678.2,304.9 691.4,305.2 704.2,306.8 717.3,307.2 730.5,308.4 742.4,310.0 755.6,311.3 768.4,312.8 781.6,316.6 794.3,318.2 807.5,320.1 820.7,322.9 833.5,324.5 846.7,329.2 859.4,329.1 872.6,331.0 885.8,330.6 898.1,330.2 911.3,330.7 924.1,327.9 937.3,331.9 950.0,335.3 963.2,338.8 976.4,340.7 989.2,341.0 1002.4,340.8 1015.1,342.7 1028.3,345.0 1041.5,346.1 1053.4,346.9 1066.6,349.5 1079.3,350.9 1092.5,350.4" fill="none" stroke="#3a3a3a" stroke-opacity="0.42" stroke-width="3.5" transform="translate(2.5,3)" filter="url(#shadow)"/>
<polyline points="406.8,166.7 420.0,170.6 431.9,178.3 445.1,180.9 457.8,180.1 471.0,190.6 483.8,188.1 497.0,193.8 510.2,195.1 522.9,196.8 536.1,202.4 548.9,205.9 562.1,207.8 575.3,209.5 587.2,211.0 600.4,215.8 613.1,217.8 626.3,217.4 639.1,218.2 652.3,223.6 665.4,229.5 678.2,232.2 691.4,236.4 704.2,241.4 717.3,245.2 730.5,247.4 742.4,248.8 755.6,251.2 768.4,253.8 781.6,255.0 794.3,259.5 807.5,261.8 820.7,262.7 833.5,268.7 846.7,266.9 859.4,274.9 872.6,279.8 885.8,286.7 898.1,290.5 911.3,293.5 924.1,301.3 937.3,300.6 950.0,301.7 963.2,298.4 976.4,299.0 989.2,301.5 1002.4,304.9 1015.1,307.0 1028.3,308.9 1041.5,310.7 1053.4,312.8 1066.6,311.1 1079.3,319.5 1092.5,328.4" fill="none" stroke="#3a3a3a" stroke-opacity="0.42" stroke-width="3.5" transform="translate(2.5,3)" filter="url(#shadow)"/>
<polyline points="406.8,420.8 420.0,420.5 431.9,420.2 445.1,419.8 457.8,419.5 471.0,419.2 483.8,418.5 497.0,417.8 510.2,417.1 522.9,416.5 536.1,415.9 548.9,417.3 562.1,415.9 575.3,415.2 587.2,414.6 600.4,413.9 613.1,413.9 626.3,413.9 639.1,413.5 652.3,413.0 665.4,412.5 678.2,412.1 691.4,411.5 704.2,410.9 717.3,410.3 730.5,410.3 742.4,410.3 755.6,410.4 768.4,410.4 781.6,410.5 794.3,410.2 807.5,409.9 820.7,408.2 833.5,406.6 846.7,406.4 859.4,406.2 872.6,403.4 885.8,403.4 898.1,403.4 911.3,401.4 924.1,401.6 937.3,402.0 950.0,401.4 963.2,400.1 976.4,398.9 989.2,399.3 1002.4,398.9 1015.1,398.5 1028.3,397.3 1041.5,396.1 1053.4,396.5 1066.6,398.9 1079.3,398.9 1092.5,397.3" fill="none" stroke="#3a3a3a" stroke-opacity="0.42" stroke-width="3.5" transform="translate(2.5,3)" filter="url(#shadow)"/>
<polyline points="406.8,420.8 420.0,420.5 431.9,420.2 445.1,419.8 457.8,419.5 471.0,419.2 483.8,418.5 497.0,417.8 510.2,417.1 522.9,416.5 536.1,415.9 548.9,417.3 562.1,415.9 575.3,415.2 587.2,414.6 600.4,413.9 613.1,413.9 626.3,413.9 639.1,413.5 652.3,413.0 665.4,412.5 678.2,412.1 691.4,411.5 704.2,410.9 717.3,410.3 730.5,410.3 742.4,410.3 755.6,410.4 768.4,410.4 781.6,410.5 794.3,410.2 807.5,409.9 820.7,408.2 833.5,406.6 846.7,406.4 859.4,406.2 872.6,403.4 885.8,403.4 898.1,403.4 911.3,401.4 924.1,401.6 937.3,402.0 950.0,401.4 963.2,400.1 976.4,398.9 989.2,399.3 1002.4,398.9 1015.1,398.5 1028.3,397.3 1041.5,396.1 1053.4,396.5 1066.6,398.9 1079.3,398.9 1092.5,397.3" fill="none" stroke="#ffffbf" stroke-width="3.5" stroke-linejoin="round"/>
<polyline points="406.8,166.7 420.0,170.6 431.9,178.3 445.1,180.9 457.8,180.1 471.0,190.6 483.8,188.1 497.0,193.8 510.2,195.1 522.9,196.8 536.1,202.4 548.9,205.9 562.1,207.8 575.3,209.5 587.2,211.0 600.4,215.8 613.1,217.8 626.3,217.4 639.1,218.2 652.3,223.6 665.4,229.5 678.2,232.2 691.4,236.4 704.2,241.4 717.3,245.2 730.5,247.4 742.4,248.8 755.6,251.2 768.4,253.8 781.6,255.0 794.3,259.5 807.5,261.8 820.7,262.7 833.5,268.7 846.7,266.9 859.4,274.9 872.6,279.8 885.8,286.7 898.1,290.5 911.3,293.5 924.1,301.3 937.3,300.6 950.0,301.7 963.2,298.4 976.4,299.0 989.2,301.5 1002.4,304.9 1015.1,307.0 1028.3,308.9 1041.5,310.7 1053.4,312.8 1066.6,311.1 1079.3,319.5 1092.5,328.4" fill="none" stroke="#fdae61" stroke-width="3.5" stroke-linejoin="round"/>
<polyline points="406.8,321.9 420.0,318.6 431.9,312.3 445.1,311.3 457.8,315.0 471.0,308.6 483.8,307.9 497.0,304.7 510.2,304.5 522.9,302.6 536.1,301.0 548.9,301.9 562.1,303.3 575.3,302.6 587.2,304.8 600.4,302.9 613.1,303.3 626.3,305.3 639.1,307.1 652.3,305.5 665.4,303.9 678.2,304.9 691.4,305.2 704.2,306.8 717.3,307.2 730.5,308.4 742.4,310.0 755.6,311.3 768.4,312.8 781.6,316.6 794.3,318.2 807.5,320.1 820.7,322.9 833.5,324.5 846.7,329.2 859.4,329.1 872.6,331.0 885.8,330.6 898.1,330.2 911.3,330.7 924.1,327.9 937.3,331.9 950.0,335.3 963.2,338.8 976.4,340.7 989.2,341.0 1002.4,340.8 1015.1,342.7 1028.3,345.0 1041.5,346.1 1053.4,346.9 1066.6,349.5 1079.3,350.9 1092.5,350.4" fill="none" stroke="#a6d96a" stroke-width="3.5" stroke-linejoin="round"/>
<polyline points="406.8,425.7 420.0,425.2 431.9,424.3 445.1,422.9 457.8,421.5 471.0,419.9 483.8,419.1 497.0,417.6 510.2,416.4 522.9,414.4 536.1,412.4 548.9,409.2 562.1,406.9 575.3,404.1 587.2,401.8 600.4,398.7 613.1,396.5 626.3,393.9 639.1,391.3 652.3,387.8 665.4,384.6 678.2,381.2 691.4,377.3 704.2,371.2 717.3,367.9 730.5,364.4 742.4,361.0 755.6,357.3 768.4,353.0 781.6,347.7 794.3,341.7 807.5,337.6 820.7,335.8 833.5,330.1 846.7,327.4 859.4,321.0 872.6,316.4 885.8,310.6 898.1,306.4 911.3,304.9 924.1,300.1 937.3,298.8 950.0,294.5 963.2,295.4 976.4,292.9 989.2,290.6 1002.4,286.8 1015.1,283.9 1028.3,283.5 1041.5,281.2 1053.4,277.3 1066.6,273.7 1079.3,263.8 1092.5,258.6" fill="none" stroke="#1a9641" stroke-width="3.5" stroke-linejoin="round"/>
</svg>
<rect x="561.5" y="481.5" width="321" height="21" fill="#fff" stroke="#000" stroke-width="1"/>
<rect x="563" y="491" width="17" height="3" fill="#1a9641"/>
<text x="583" y="496" font-size="13" font-weight="normal" fill="#444" text-anchor="start" textLength="47" lengthAdjust="spacingAndGlyphs" >Chrome</text>
<rect x="634" y="491" width="17" height="3" fill="#a6d96a"/>
<text x="654" y="496" font-size="13" font-weight="normal" fill="#444" text-anchor="start" textLength="40" lengthAdjust="spacingAndGlyphs" >Firefox</text>
<rect x="698" y="491" width="17" height="3" fill="#fdae61"/>
<text x="718" y="496" font-size="13" font-weight="normal" fill="#444" text-anchor="start" textLength="103" lengthAdjust="spacingAndGlyphs" >Internet Explorer</text>
<rect x="825" y="491" width="17" height="3" fill="#ffffbf"/>
<text x="845" y="496" font-size="13" font-weight="normal" fill="#444" text-anchor="start" textLength="34" lengthAdjust="spacingAndGlyphs" >Safari</text>
<rect x="1119" y="100" width="14" height="406" fill="#d6d9df"/>
<rect x="1118" y="103" width="1" height="402" fill="#000"/>
</svg></body></html>
